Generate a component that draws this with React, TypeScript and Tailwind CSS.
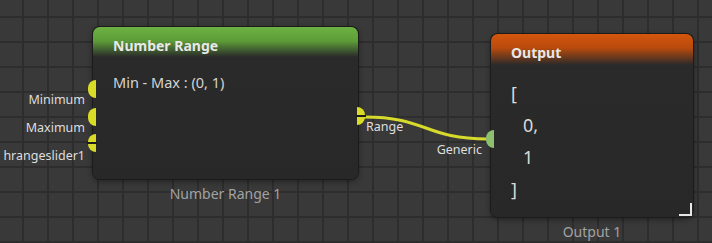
import React from "react";

const font = { fontFamily: '"Noto Sans", "Open Sans", sans-serif' };

function Port({
  side,
  color,
  striped,
}: {
  side: "left" | "right";
  color: string;
  striped?: boolean;
}) {
  return (
    <div
      className={
        "relative shrink-0 w-[8px] h-[18px] " +
        (side === "left" ? "rounded-l-full" : "rounded-r-full")
      }
      style={{ background: color }}
    >
      {striped && <div className="absolute left-[-1px] right-[-1px] top-[8px] h-[2px] bg-[#1c1c1c]" />}
    </div>
  );
}

function InRow({ label, color, striped, low }: { label: string; color: string; striped?: boolean; low?: boolean }) {
  return (
    <div className="flex items-start justify-end gap-[3px]">
      <span className={(low ? "mt-[14px] " : "mt-[12px] ") + "text-[12.5px] leading-[16px] text-[#dedede] whitespace-nowrap"}>{label}</span>
      <Port side="left" color={color} striped={striped} />
    </div>
  );
}

const YELLOW = "#d8dc27";

export default function App() {
  return (
    <div
      className="relative w-[712px] h-[243px] overflow-hidden bg-[#393939] bg-[linear-gradient(to_right,#2d2d2d_2px,transparent_2px),linear-gradient(to_bottom,#2d2d2d_2px,transparent_2px)] bg-[size:25px_25px] bg-[position:22px_16px]"
      style={font}
    >
      {/* connection */}
      <svg className="absolute inset-0" width={712} height={243}>
        <path
          d="M364 117 C 428 117, 424 139, 488 139"
          fill="none"
          stroke="#d6da2c"
          strokeWidth={3}
        />
      </svg>

      {/* Number Range node */}
      <div className="absolute left-[93px] top-[27px] w-[265px]">
        <div className="relative h-[152px] rounded-[7px] bg-[linear-gradient(to_bottom,#6db243_0px,#5d9c38_14px,#2a2a2a_30px,#282828_100%)] shadow-[0_0_0_1px_#1b1b1b,0_2px_6px_rgba(0,0,0,0.45)] pl-[20px] pt-[11px]">
          <div className="text-[14px] leading-[16px] font-bold text-[#e8e8e8]">Number Range</div>
          <div className="mt-[18px] text-[14.5px] leading-[20px] text-[#d4d4d4]">Min - Max : (0, 1)</div>

          <div className="absolute right-[calc(100%-3px)] top-[53px] flex flex-col">
            <InRow label="Minimum" color={YELLOW} />
            <InRow label="Maximum" color={YELLOW} />
            <div className="-mt-[2px]">
              <InRow label="hrangeslider1" color={YELLOW} striped low />
            </div>
          </div>

          <div className="absolute left-[calc(100%-1px)] top-[80px] flex items-start gap-[1px]">
            <Port side="right" color={YELLOW} striped />
            <span className="mt-[12px] text-[12.5px] leading-[16px] text-[#dedede] whitespace-nowrap">Range</span>
          </div>
        </div>
        <div className="mt-[5px] text-center text-[14px] leading-[20px] text-[#a2a2a2]">Number Range 1</div>
      </div>

      {/* Output node */}
      <div className="absolute left-[491px] top-[34px] w-[202px]">
        <div className="relative h-[183px] rounded-[7px] bg-[linear-gradient(to_bottom,#d5560c_0px,#b84a0c_14px,#2a2a2a_31px,#282828_100%)] shadow-[0_0_0_1px_#1b1b1b,0_2px_6px_rgba(0,0,0,0.45)] pl-[20px] pt-[11px]">
          <div className="text-[14px] leading-[16px] font-bold text-[#e8e8e8]">Output</div>
          <div className="mt-[16px] text-[18px] leading-[32px] text-[#dadada]">
            <div>[</div>
            <div className="pl-[12px]">0,</div>
            <div className="pl-[12px]">1</div>
            <div>]</div>
          </div>

          <div className="absolute right-[calc(100%-3px)] top-[96px] flex items-start justify-end gap-[4px]">
            <span className="mt-[12px] text-[12.5px] leading-[16px] text-[#dedede] whitespace-nowrap">Generic</span>
            <Port side="left" color="#8dbf6f" />
          </div>

          <div className="absolute right-[1px] bottom-[1px] w-[13px] h-[13px] border-r-2 border-b-2 border-[#e6e6e6]" />
        </div>
        <div className="mt-[5px] text-center text-[14px] leading-[20px] text-[#a2a2a2]">Output 1</div>
      </div>
    </div>
  );
}
